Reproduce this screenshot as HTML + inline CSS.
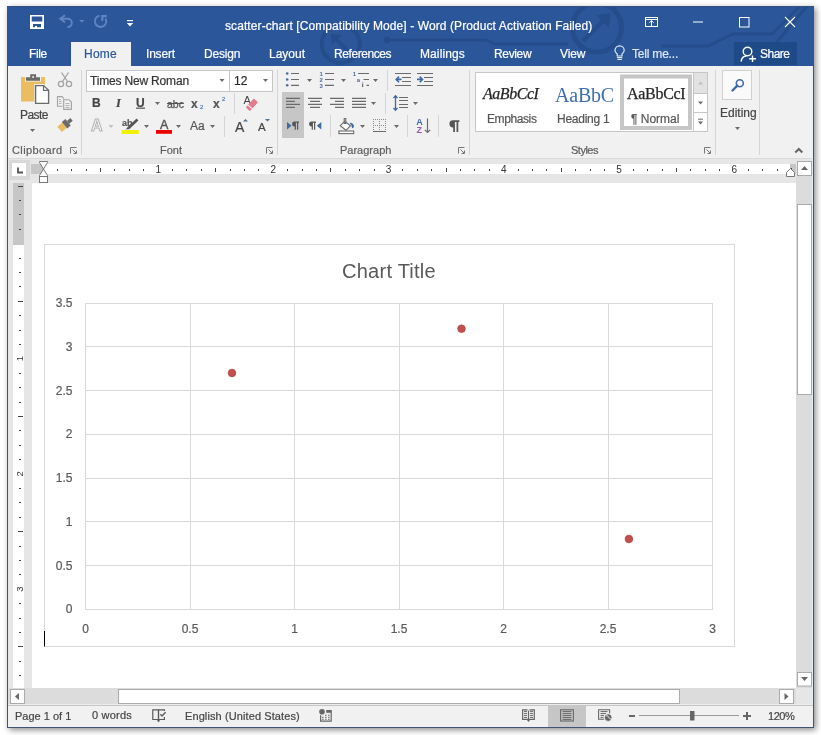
<!DOCTYPE html>
<html><head><meta charset="utf-8">
<style>
*{margin:0;padding:0;box-sizing:border-box}
html,body{width:821px;height:735px;overflow:hidden;background:#fff;position:relative;font-family:"Liberation Sans",sans-serif}
.a{position:absolute}
.t{position:absolute;white-space:nowrap;line-height:1;will-change:transform;-webkit-text-stroke-width:.2px}
svg{position:absolute;overflow:visible;will-change:transform}
</style></head><body>
<!-- window frame -->
<div class="a" style="left:7px;top:6px;width:807px;height:722px;background:#f1f1f1;border:1px solid #3d5474;border-top:0;box-shadow:2px 2px 6px rgba(0,0,0,.45)"></div>
<!-- title + tabs blue -->
<div class="a" style="left:7px;top:6px;width:807px;height:60px;background:#2b579a"></div>

<!-- TITLEBAR -->
<svg width="821" height="70" style="left:0;top:0" viewBox="0 0 821 70">
  <defs><clipPath id="tb"><rect x="8" y="7" width="805" height="59"/></clipPath></defs>
  <g clip-path="url(#tb)">
  <g fill="none" stroke="#254d8b" stroke-width="3">
    <circle cx="597" cy="27.6" r="24.5" stroke-width="5"/>
    <path d="M583 41 L603 21" stroke-width="4"/>
    <path d="M387 40 H483 Q489 40 494 44 H568"/>
    <circle cx="340.7" cy="44" r="19" stroke-width="4"/>
    <path d="M348 51 L336 39" stroke-width="3.5"/>
    <path d="M661 46 H708 L733 34 H772 L800 6"/>
    <path d="M757 66 L807 6"/>
  </g>
  <path d="M611 13 L596 15 L609 28 Z" fill="#254d8b"/>
  <path d="M331 34 L342 35 L332 45 Z" fill="#254d8b"/>
  <circle cx="387" cy="40" r="3.5" fill="#254d8b"/>
  </g>
  <!-- save -->
  <path fill="#fff" fill-rule="evenodd" d="M30 15 H44 V29 H30 Z M31.7 16.5 H42.3 V21.6 H31.7 Z M33 24 H41 V27.3 H37 V26 H35 V27.3 H33 Z"/>
  <!-- undo -->
  <g fill="none" stroke="#5f84c3" stroke-width="1.9">
    <path d="M65 15.3 L60.2 18.8 L65 22.3"/>
    <path d="M60.5 18.8 H68 A4.1 4.1 0 0 1 67.5 27"/>
  </g>
  <path d="M79 20 H84.5 L81.75 22.5 Z" fill="#5f84c3"/>
  <!-- redo -->
  <path d="M99.6 15.64 A5.7 5.7 0 1 0 105.5 18.4" fill="none" stroke="#5f84c3" stroke-width="1.9"/>
  <path d="M101.2 15 H106.9 V17.2 H103.4 V20.7 H101.2 Z" fill="#5f84c3"/>
  <!-- customize -->
  <rect x="127" y="20" width="6" height="1.2" fill="#fff"/>
  <path d="M126.8 23 H133.2 L130 26.6 Z" fill="#fff"/>
  <!-- ribbon display options -->
  <g fill="none" stroke="#fff" stroke-width="1">
    <rect x="645.5" y="17.5" width="12" height="9"/>
    <path d="M645.5 19.5 H657.5"/>
    <path d="M651.5 26.5 V20.6 M649.3 22.8 L651.5 20.6 L653.7 22.8"/>
  </g>
  <rect x="693" y="21.5" width="10" height="1" fill="#fff"/>
  <rect x="739.5" y="17.5" width="9.5" height="9.5" fill="none" stroke="#fff" stroke-width="1"/>
  <path d="M785 17 L795 27 M795 17 L785 27" stroke="#fff" stroke-width="1.1"/>
  <!-- share bg -->
  <rect x="734" y="42" width="63" height="23" fill="#1f4a88"/>
  <g fill="none" stroke="#fff" stroke-width="1.4">
    <circle cx="747.5" cy="51.5" r="4.3"/>
    <path d="M741 61.5 Q742 56 746.5 56"/>
    <path d="M752.5 55.5 V62 M749.2 58.7 H756"/>
  </g>
  <!-- bulb -->
  <g fill="none" stroke="#dfe8f6" stroke-width="1.2">
    <path d="M617.2 56 V54 Q615 52 615 50.5 A4.6 4.6 0 0 1 624.2 50.5 Q624.2 52 622 54 V56 Z"/>
    <path d="M617 57.6 H622.3 M617.5 59.5 H621.8"/>
  </g>
</svg>
<div class="a" style="left:71px;top:42px;width:60px;height:24px;background:#f1f1f1"></div>
<div class="t" style="left:225px;top:20px;font-size:12px;letter-spacing:.09px;color:#fff">scatter-chart [Compatibility Mode] - Word (Product Activation Failed)</div>
<div class="t" style="left:28.5px;top:48px;font-size:12px;letter-spacing:-.4px;color:#fff">File</div>
<div class="t" style="left:84px;top:48px;font-size:12px;letter-spacing:.25px;color:#2b579a">Home</div>
<div class="t" style="left:146px;top:48px;font-size:12px;letter-spacing:-.2px;color:#fff">Insert</div>
<div class="t" style="left:204px;top:48px;font-size:12px;letter-spacing:-.2px;color:#fff">Design</div>
<div class="t" style="left:269px;top:48px;font-size:12px;color:#fff">Layout</div>
<div class="t" style="left:334px;top:48px;font-size:12px;letter-spacing:-.42px;color:#fff">References</div>
<div class="t" style="left:420px;top:48px;font-size:12px;letter-spacing:.1px;color:#fff">Mailings</div>
<div class="t" style="left:494px;top:48px;font-size:12px;letter-spacing:-.35px;color:#fff">Review</div>
<div class="t" style="left:560px;top:48px;font-size:12px;letter-spacing:-.15px;color:#fff">View</div>
<div class="t" style="left:631.5px;top:48px;font-size:12px;letter-spacing:-.2px;color:#dfe8f6">Tell me...</div>
<div class="t" style="left:760px;top:48px;font-size:12px;letter-spacing:-.5px;color:#fff">Share</div>

<!-- ribbon -->
<div class="a" style="left:8px;top:66px;width:805px;height:92px;background:#f1f1f1"></div>
<div class="a" style="left:8px;top:158px;width:805px;height:1px;background:#dadada"></div>

<!-- RIBBON ICONS -->
<svg width="821" height="160" style="left:0;top:0" viewBox="0 0 821 160">
  <!-- separators -->
  <g fill="#d5d5d5">
    <rect x="81" y="70" width="1" height="85"/>
    <rect x="277" y="70" width="1" height="85"/>
    <rect x="469" y="70" width="1" height="85"/>
    <rect x="715" y="70" width="1" height="85"/>
    <rect x="759" y="70" width="1" height="85"/>
    <rect x="234" y="93" width="1" height="21"/>
    <rect x="224" y="116" width="1" height="21"/>
    <rect x="387" y="70" width="1" height="21"/>
    <rect x="385" y="93" width="1" height="21"/>
    <rect x="330" y="115" width="1" height="22"/>
    <rect x="407" y="115" width="1" height="22"/>
    <rect x="438" y="115" width="1" height="22"/>
  </g>
  <!-- paste -->
  <rect x="21" y="77" width="24" height="24.5" fill="#ebbd62"/>
  <rect x="25" y="76" width="16" height="5.5" fill="#f1f1f1"/>
  <path d="M26 77.3 H30.2 V74.2 H36.1 V77.3 H40 V80.8 H26 Z" fill="#6b6b6b"/>
  <circle cx="33.1" cy="77" r="1" fill="#f1f1f1"/>
  <path d="M34.2 84 H44 L49.8 89.5 V104.8 H34.2 Z" fill="#f1f1f1"/>
  <path d="M35.6 85.6 H43.5 L48.6 90.3 V103.4 H35.6 Z" fill="#fff" stroke="#6b6b6b" stroke-width="1.4"/>
  <path d="M43.5 85.6 V90.3 H48.6" fill="none" stroke="#6b6b6b" stroke-width="1.2"/>
  <path d="M30 129 H35 L32.5 132 Z" fill="#6b6b6b"/>
  <!-- scissors -->
  <g fill="none" stroke="#a3a3a3" stroke-width="1.3">
    <path d="M61.5 72.5 L67.5 81.5 M68.5 72.5 L62.5 81.5"/>
    <circle cx="61" cy="84" r="2.6"/>
    <circle cx="69" cy="84" r="2.6"/>
  </g>
  <!-- copy -->
  <g fill="none" stroke="#a3a3a3" stroke-width="1.1">
    <path d="M62.5 106.3 H57.5 V96.6 H62 L64 98.6"/>
    <path d="M63.7 99.7 H69 L71.4 102.1 V109.4 H63.7 Z" fill="#f1f1f1"/>
    <path d="M59 99.5 H61 M59 101.5 H61.5 M59 103.5 H61.5 M65.5 103.5 H69.5 M65.5 105.5 H69.5 M65.5 107.5 H69.5" stroke-width=".8"/>
  </g>
  <!-- format painter -->
  <g transform="translate(.6 -1.6) rotate(-40 65.5 125.5)">
    <rect x="57" y="122" width="6.5" height="7" fill="#ebbd62"/>
    <rect x="63.5" y="121.3" width="4.5" height="8.4" fill="#6b6b6b"/>
    <rect x="68" y="123.8" width="4.5" height="3.6" fill="#6b6b6b"/>
  </g>
  <!-- dialog launchers -->
  <g fill="none" stroke="#777" stroke-width="1">
    <path d="M70.5 153.5 V147.5 H76.5 M72.5 149.5 L76 153 M76.5 150.5 V153.5 H73.5"/>
    <path d="M266.5 153.5 V147.5 H272.5 M268.5 149.5 L272 153 M272.5 150.5 V153.5 H269.5"/>
    <path d="M458.5 153.5 V147.5 H464.5 M460.5 149.5 L464 153 M464.5 150.5 V153.5 H461.5"/>
    <path d="M704.5 153.5 V147.5 H710.5 M706.5 149.5 L710 153 M710.5 150.5 V153.5 H707.5"/>
  </g>
  <!-- font boxes -->
  <rect x="86.5" y="70.5" width="143" height="21" fill="#fff" stroke="#c6c6c6"/>
  <rect x="229.5" y="70.5" width="43" height="21" fill="#fff" stroke="#c6c6c6"/>
  <g fill="#6b6b6b">
    <path d="M219.5 79 H224.5 L222 82 Z"/>
    <path d="M263 79 H268 L265.5 82 Z"/>
    <path d="M155 102 H160 L157.5 105 Z"/>
    <path d="M144 125 H149 L146.5 128 Z"/>
    <path d="M176 125 H181 L178.5 128 Z"/>
    <path d="M210 125 H215 L212.5 128 Z"/>
  </g>
  <path d="M108.5 125 H113.5 L111 128 Z" fill="#c0c0c0"/>
  <text x="91" y="131.2" font-family="Liberation Sans" font-size="16" font-weight="bold" fill="#fafafa" stroke="#b3b3b3" stroke-width="1">A</text>
  <!-- underline -->
  <rect x="136" y="107.6" width="9" height="1.1" fill="#444"/>
  <!-- abc strike -->
  <rect x="167" y="103" width="16.5" height="1" fill="#555"/>
  <!-- clear formatting -->
  <text x="243.5" y="103.8" font-family="Liberation Sans" font-size="11" fill="#444">A</text>
  <g transform="rotate(-48 251.8 104.8)">
    <rect x="245.8" y="102" width="12" height="5.6" rx="1" fill="#e8788a"/>
    <rect x="248.6" y="101.5" width="1.1" height="6.6" fill="#f1f1f1"/>
  </g>
  <!-- highlighter pen -->
  <path d="M128 128.5 L137.5 119.5" stroke="#555" stroke-width="2.6"/>
  <path d="M125.5 129.5 L127.5 127.5 L129 129 Z" fill="#555"/>
  <rect x="121.7" y="130" width="17" height="4" fill="#f2f200"/>
  <rect x="156" y="130" width="16" height="3.8" fill="#ee0000"/>
  <!-- grow/shrink arrows -->
  <path d="M243 121.6 L245.5 119 L248 121.6 Z" fill="#4d6e96"/>
  <path d="M265 119 H270 L267.5 121.6 Z" fill="#4d6e96"/>
  <!-- paragraph: bullets -->
  <g fill="#4a6c9c">
    <circle cx="287.2" cy="73.5" r="1.3"/><circle cx="287.2" cy="79.5" r="1.3"/><circle cx="287.2" cy="85.3" r="1.3"/>
  </g>
  <g stroke="#6b6b6b" stroke-width="1.2">
    <path d="M291 73.5 H299 M291 79.5 H299 M291 85.3 H299"/>
    <path d="M325 73.5 H334 M325 79.5 H334 M325 85.3 H334"/>
    <path d="M358 73.5 H369 M363.5 79.5 H369 M366.5 85.3 H369"/>
  </g>
  <g fill="#4a6c9c" font-family="Liberation Sans" font-size="6" font-weight="bold">
    <text x="319.6" y="76">1</text><text x="319.6" y="82">2</text><text x="319.6" y="88">3</text>
    <text x="352.8" y="76">1</text><text x="356.8" y="82">a</text>
  </g>
  <rect x="362" y="84" width="1.2" height="3" fill="#6b6b6b"/>
  <rect x="362" y="82.5" width="1.2" height="1" fill="#6b6b6b"/>
  <g fill="#6b6b6b">
    <path d="M307 79 H312 L309.5 82 Z"/>
    <path d="M341 79 H346 L343.5 82 Z"/>
    <path d="M373 79 H378 L375.5 82 Z"/>
    <path d="M371 102 H376 L373.5 105 Z"/>
    <path d="M413 102 H418 L415.5 105 Z"/>
    <path d="M360 125 H365 L362.5 128 Z"/>
    <path d="M394 125 H399 L396.5 128 Z"/>
  </g>
  <!-- indent -->
  <g stroke="#6b6b6b" stroke-width="1.2">
    <path d="M395 73.5 H411 M402 77.5 H411 M402 81.5 H411 M395 85.5 H411" stroke-width="1"/>
    <path d="M417 73.5 H433 M424 77.5 H433 M424 81.5 H433 M417 85.5 H433" stroke-width="1"/>
  </g>
  <g fill="none" stroke="#3f6aa8" stroke-width="1.6">
    <path d="M396 79.4 H401.5 M399 76.6 L396.2 79.4 L399 82.2"/>
    <path d="M417 79.4 H422.5 M419.7 76.6 L422.5 79.4 L419.7 82.2"/>
  </g>
  <!-- alignment -->
  <rect x="282" y="92" width="22" height="46" fill="#c6c6c6"/>
  <g stroke="#6b6b6b" stroke-width="1.2">
    <path d="M286 98.3 H300 M286 101.3 H295 M286 104.3 H300 M286 107.3 H295"/>
    <path d="M308 98.3 H322 M310 101.3 H320 M308 104.3 H322 M310 107.3 H320"/>
    <path d="M330 98.3 H344 M335 101.3 H344 M330 104.3 H344 M335 107.3 H344"/>
    <path d="M352 98.3 H366 M352 101.3 H366 M352 104.3 H366 M352 107.3 H366"/>
  </g>
  <!-- line spacing -->
  <g stroke="#6b6b6b" stroke-width="1">
    <path d="M399 97.5 H408 M399 100.5 H408 M399 104.5 H408 M399 107.5 H408"/>
  </g>
  <g fill="none" stroke="#3f6aa8" stroke-width="1.3">
    <path d="M395.5 96 V110 M393.5 98 L395.5 95.7 L397.5 98 M393.5 108 L395.5 110.3 L397.5 108"/>
  </g>
  <!-- ltr/rtl -->
  <path d="M287 122 L291.5 125.7 L287 129.4 Z" fill="#3f6aa8"/>
  <path id="pil" d="M294.5 121.6 H299 V122.8 H298.2 V129.7 H297 V122.8 H295.9 V129.7 H294.7 V126.6 A2.5 2.5 0 0 1 294.5 121.6 Z" fill="#555"/>
  <use href="#pil" x="17"/>
  <g transform="translate(449 120.3) scale(1.45) translate(-291.8 -121.6)"><use href="#pil" fill="#6b6b6b"/></g>
  <path d="M321.3 122 L316.8 125.7 L321.3 129.4 Z" fill="#3f6aa8"/>
  <!-- shading -->
  <g fill="none" stroke="#6b6b6b" stroke-width="1.1">
    <path d="M344.7 121.3 L340.2 125.7 L346 130.3 L350.5 125.7 Z" fill="#fff"/>
    <path d="M344.2 118.5 H345.8 V123.5 H344.2 Z"/>
    <rect x="338.9" y="131" width="14.8" height="2.6" fill="#fff"/>
  </g>
  <path d="M349.5 122.8 Q353.5 122.5 354 126.5 Q353.5 128.5 352 128.3 L351.5 125.5 Z" fill="#3f6aa8"/>
  <!-- borders -->
  <g fill="#6b6b6b">
    <rect x="373" y="131" width="13" height="1"/>
  </g>
  <g stroke="#8a8a8a" stroke-width="1" stroke-dasharray="1 1">
    <path d="M373.5 119 V130 M385.5 119 V130 M379.5 119 V130 M373 119.5 H386 M373 125.5 H386"/>
  </g>
  <!-- sort -->
  <g font-family="Liberation Sans" font-size="9" font-weight="bold">
    <text x="416.3" y="125.3" fill="#3f6aa8">A</text>
    <text x="416.6" y="133.2" fill="#9b59b6">Z</text>
  </g>
  <path d="M427.5 118.5 V132.5 M424.8 129.8 L427.5 132.5 L430.2 129.8" fill="none" stroke="#6b6b6b" stroke-width="1.2"/>
  <!-- styles gallery -->
  <rect x="475.5" y="72.5" width="232" height="59" fill="#fff" stroke="#c6c6c6"/>
  <rect x="622" y="76.5" width="68" height="51.5" fill="none" stroke="#c6c6c6" stroke-width="4"/>
  <rect x="693.5" y="72.5" width="14" height="59" fill="#fff" stroke="#c6c6c6"/>
  <rect x="694" y="73" width="13" height="20.5" fill="#e2e2e2"/>
  <path d="M694 93.5 H707 M694 112.5 H707" stroke="#c6c6c6"/>
  <path d="M698 84.5 H703 L700.5 81.5 Z" fill="#c0c0c0"/>
  <path d="M698 101.5 H703 L700.5 104.5 Z" fill="#6b6b6b"/>
  <path d="M698 119.2 H703" stroke="#6b6b6b"/>
  <path d="M698 121.5 H703 L700.5 124.5 Z" fill="#6b6b6b"/>
  <!-- editing -->
  <rect x="722.5" y="70.5" width="29" height="29" fill="#fafafa" stroke="#d0d0d0"/>
  <circle cx="739.8" cy="83.2" r="3.5" fill="none" stroke="#3f6aa8" stroke-width="1.6"/>
  <path d="M737.3 85.7 L732.5 90.5" stroke="#3f6aa8" stroke-width="2.4" stroke-linecap="round"/>
  <path d="M735 127 H740 L737.5 130 Z" fill="#6b6b6b"/>
  <path d="M795.3 152.6 L798.8 149.1 L802.3 152.6" fill="none" stroke="#666" stroke-width="2.1"/>
</svg>
<div class="t" style="left:19.5px;top:108.5px;font-size:12px;letter-spacing:-.55px;color:#444">Paste</div>
<div class="t" style="left:11.5px;top:145px;font-size:11px;letter-spacing:.37px;color:#5c5c5c">Clipboard</div>
<div class="t" style="left:160px;top:145px;font-size:11px;color:#5c5c5c">Font</div>
<div class="t" style="left:339.5px;top:145px;font-size:11px;color:#5c5c5c">Paragraph</div>
<div class="t" style="left:570.5px;top:145px;font-size:11px;letter-spacing:-.5px;color:#5c5c5c">Styles</div>
<div class="t" style="left:90px;top:74.5px;font-size:12px;letter-spacing:-.18px;color:#333">Times New Roman</div>
<div class="t" style="left:233.5px;top:74.5px;font-size:12px;color:#262626">12</div>
<div class="t" style="left:92px;top:97px;font-size:12px;font-weight:bold;color:#444">B</div>
<div class="t" style="left:115.5px;top:97px;font-size:12.5px;font-weight:bold;font-style:italic;font-family:'Liberation Serif';color:#444">I</div>
<div class="t" style="left:136px;top:97px;font-size:12px;font-weight:bold;color:#444">U</div>
<div class="t" style="left:167.2px;top:98.6px;font-size:10.5px;-webkit-text-stroke:.25px #555;color:#555">abc</div>
<div class="t" style="left:191px;top:98px;font-size:12px;font-weight:bold;color:#555">x</div>
<div class="t" style="left:199.6px;top:103.8px;font-size:6px;color:#4a7ab5">2</div>
<div class="t" style="left:213px;top:98px;font-size:12px;font-weight:bold;color:#555">x</div>
<div class="t" style="left:221.8px;top:96.2px;font-size:6px;color:#4a7ab5">2</div>

<div class="t" style="left:121.7px;top:118.5px;font-size:9px;font-weight:bold;color:#555">ab</div>
<div class="t" style="left:159.5px;top:118.5px;font-size:12.5px;-webkit-text-stroke:.4px #555;color:#555">A</div>
<div class="t" style="left:190px;top:119.5px;font-size:12px;color:#555">Aa</div>
<div class="t" style="left:235.3px;top:120.2px;font-size:14px;color:#444">A</div>
<div class="t" style="left:258.2px;top:122.2px;font-size:11.5px;color:#444">A</div>



<div class="t" style="left:483px;top:86px;font-size:16px;font-style:italic;letter-spacing:-.45px;-webkit-text-stroke:.25px #262626;font-family:'Liberation Serif';color:#262626">AaBbCcI</div>
<div class="t" style="left:487px;top:112.5px;font-size:12px;letter-spacing:-.4px;color:#555">Emphasis</div>
<div class="t" style="left:555px;top:84.5px;font-size:20px;letter-spacing:-.2px;-webkit-text-stroke-width:0;font-family:'Liberation Serif';color:#3e6fb0">AaBbC</div>
<div class="t" style="left:557px;top:112.5px;font-size:12px;letter-spacing:-.25px;color:#555">Heading 1</div>
<div class="t" style="left:626.5px;top:86px;font-size:16px;letter-spacing:-.3px;-webkit-text-stroke:.25px #262626;font-family:'Liberation Serif';color:#262626">AaBbCcI</div>
<div class="t" style="left:631px;top:112.5px;font-size:12px;color:#555">&para; Normal</div>
<div class="t" style="left:719.5px;top:107px;font-size:12px;color:#444">Editing</div>

<!-- ruler area -->
<div class="a" style="left:8px;top:159px;width:805px;height:24px;background:#e6e6e6"></div>
<!-- left workspace -->
<div class="a" style="left:8px;top:183px;width:24px;height:505px;background:#e6e6e6"></div>
<!-- doc -->
<div class="a" style="left:32px;top:183px;width:764px;height:505px;background:#fff"></div>
<!-- vscroll -->
<div class="a" style="left:796px;top:176px;width:17px;height:512px;background:#dcdcdc"></div>
<!-- hscroll -->
<div class="a" style="left:8px;top:688px;width:788px;height:16px;background:#dcdcdc"></div>
<div class="a" style="left:796px;top:688px;width:17px;height:16px;background:#e6e6e6"></div>

<!-- RULERS -->
<svg width="821" height="735" style="left:0;top:0" viewBox="0 0 821 735">
  <rect x="9" y="160" width="21" height="20" fill="#d8d8d8"/>
  <rect x="12" y="163" width="14" height="13" fill="#fff"/>
  <path d="M18 167.5 V172.5 H23" fill="none" stroke="#555" stroke-width="1.8"/>
  <rect x="31" y="164" width="765" height="10" fill="#c6c6c6"/>
  <rect x="43" y="164" width="747" height="10" fill="#fff"/>
  <g fill="#444"><rect x="57" y="169" width="1" height="2"/><rect x="71" y="169" width="1" height="2"/><rect x="86" y="169" width="1" height="2"/><rect x="100" y="168" width="1" height="4"/><rect x="114" y="169" width="1" height="2"/><rect x="129" y="169" width="1" height="2"/><rect x="143" y="169" width="1" height="2"/><rect x="172" y="169" width="1" height="2"/><rect x="186" y="169" width="1" height="2"/><rect x="201" y="169" width="1" height="2"/><rect x="215" y="168" width="1" height="4"/><rect x="230" y="169" width="1" height="2"/><rect x="244" y="169" width="1" height="2"/><rect x="258" y="169" width="1" height="2"/><rect x="287" y="169" width="1" height="2"/><rect x="302" y="169" width="1" height="2"/><rect x="316" y="169" width="1" height="2"/><rect x="330" y="168" width="1" height="4"/><rect x="345" y="169" width="1" height="2"/><rect x="359" y="169" width="1" height="2"/><rect x="374" y="169" width="1" height="2"/><rect x="402" y="169" width="1" height="2"/><rect x="417" y="169" width="1" height="2"/><rect x="431" y="169" width="1" height="2"/><rect x="446" y="168" width="1" height="4"/><rect x="460" y="169" width="1" height="2"/><rect x="474" y="169" width="1" height="2"/><rect x="489" y="169" width="1" height="2"/><rect x="518" y="169" width="1" height="2"/><rect x="532" y="169" width="1" height="2"/><rect x="546" y="169" width="1" height="2"/><rect x="561" y="168" width="1" height="4"/><rect x="575" y="169" width="1" height="2"/><rect x="590" y="169" width="1" height="2"/><rect x="604" y="169" width="1" height="2"/><rect x="633" y="169" width="1" height="2"/><rect x="647" y="169" width="1" height="2"/><rect x="662" y="169" width="1" height="2"/><rect x="676" y="168" width="1" height="4"/><rect x="690" y="169" width="1" height="2"/><rect x="705" y="169" width="1" height="2"/><rect x="719" y="169" width="1" height="2"/><rect x="748" y="169" width="1" height="2"/><rect x="762" y="169" width="1" height="2"/><rect x="777" y="169" width="1" height="2"/><rect x="791" y="168" width="1" height="4"/></g>
  <g fill="#333" font-family="Liberation Sans" font-size="10"><text x="158.2" y="173" text-anchor="middle">1</text><text x="273.4" y="173" text-anchor="middle">2</text><text x="388.6" y="173" text-anchor="middle">3</text><text x="503.8" y="173" text-anchor="middle">4</text><text x="619.0" y="173" text-anchor="middle">5</text><text x="734.2" y="173" text-anchor="middle">6</text></g>
  <!-- indent markers -->
  <path d="M39.5 161.5 H47.5 V162.5 L43.5 169 L47.5 175.5 V176.5 H39.5 V175.5 L43.5 169 L39.5 162.5 Z" fill="#fff" stroke="#777" stroke-width="1"/>
  <rect x="39.5" y="176.5" width="8" height="6" fill="#fff" stroke="#777" stroke-width="1"/>
  <path d="M786.5 176.5 V172.5 L790.5 168.5 L794.5 172.5 V176.5 Z" fill="#fff" stroke="#777"/>
  <!-- vertical ruler -->
  <rect x="13" y="183" width="11" height="62" fill="#c6c6c6"/>
  <rect x="13" y="245" width="11" height="443" fill="#fff"/>
  <g fill="#444"><rect x="18" y="186" width="5" height="1"/><rect x="19" y="200" width="2" height="1"/><rect x="19" y="214" width="2" height="1"/><rect x="19" y="229" width="2" height="1"/><rect x="19" y="258" width="2" height="1"/><rect x="19" y="272" width="2" height="1"/><rect x="19" y="286" width="2" height="1"/><rect x="18" y="301" width="5" height="1"/><rect x="19" y="315" width="2" height="1"/><rect x="19" y="330" width="2" height="1"/><rect x="19" y="344" width="2" height="1"/><rect x="19" y="373" width="2" height="1"/><rect x="19" y="387" width="2" height="1"/><rect x="19" y="402" width="2" height="1"/><rect x="18" y="416" width="5" height="1"/><rect x="19" y="430" width="2" height="1"/><rect x="19" y="445" width="2" height="1"/><rect x="19" y="459" width="2" height="1"/><rect x="19" y="488" width="2" height="1"/><rect x="19" y="502" width="2" height="1"/><rect x="19" y="517" width="2" height="1"/><rect x="18" y="531" width="5" height="1"/><rect x="19" y="546" width="2" height="1"/><rect x="19" y="560" width="2" height="1"/><rect x="19" y="574" width="2" height="1"/><rect x="19" y="603" width="2" height="1"/><rect x="19" y="618" width="2" height="1"/><rect x="19" y="632" width="2" height="1"/><rect x="18" y="646" width="5" height="1"/><rect x="19" y="661" width="2" height="1"/><rect x="19" y="675" width="2" height="1"/></g>
  <g fill="#333" font-family="Liberation Sans" font-size="9.5"><text x="0" y="0" transform="translate(22.5 358.7) rotate(-90)" text-anchor="middle">1</text><text x="0" y="0" transform="translate(22.5 473.9) rotate(-90)" text-anchor="middle">2</text><text x="0" y="0" transform="translate(22.5 589.1) rotate(-90)" text-anchor="middle">3</text></g>
</svg>

<!-- CHART -->
<svg width="821" height="735" style="left:0;top:0" viewBox="0 0 821 735">
  <rect x="44.5" y="244.5" width="690" height="402" fill="#fff" stroke="#d9d9d9"/>
  <g fill="#d9d9d9">
    <rect x="190" y="303" width="1" height="306"/><rect x="294" y="303" width="1" height="306"/><rect x="399" y="303" width="1" height="306"/><rect x="503" y="303" width="1" height="306"/><rect x="608" y="303" width="1" height="306"/><rect x="85" y="565" width="627" height="1"/><rect x="85" y="521" width="627" height="1"/><rect x="85" y="478" width="627" height="1"/><rect x="85" y="434" width="627" height="1"/><rect x="85" y="390" width="627" height="1"/><rect x="85" y="346" width="627" height="1"/>
    <rect x="85" y="303" width="1" height="306"/>
    <rect x="712" y="303" width="1" height="306"/>
    <rect x="85" y="303" width="628" height="1"/>
    <rect x="85" y="609" width="628" height="1"/>
  </g>
  <g fill="#595959" stroke="#595959" stroke-width=".2" font-family="Liberation Sans" font-size="12"><text x="72.5" y="613.3" text-anchor="end">0</text><text x="72.5" y="569.6" text-anchor="end">0.5</text><text x="72.5" y="525.9" text-anchor="end">1</text><text x="72.5" y="482.2" text-anchor="end">1.5</text><text x="72.5" y="438.4" text-anchor="end">2</text><text x="72.5" y="394.7" text-anchor="end">2.5</text><text x="72.5" y="351.0" text-anchor="end">3</text><text x="72.5" y="307.3" text-anchor="end">3.5</text><text x="85.5" y="633" text-anchor="middle">0</text><text x="190.0" y="633" text-anchor="middle">0.5</text><text x="294.5" y="633" text-anchor="middle">1</text><text x="399.0" y="633" text-anchor="middle">1.5</text><text x="503.5" y="633" text-anchor="middle">2</text><text x="608.0" y="633" text-anchor="middle">2.5</text><text x="712.5" y="633" text-anchor="middle">3</text></g>
  <text x="389" y="277.5" text-anchor="middle" fill="#595959" font-family="Liberation Sans" font-size="20" letter-spacing=".25">Chart Title</text>
  <g fill="#c0504d" stroke="#b2433f" stroke-width="0.8">
    <circle cx="232" cy="373" r="3.8"/>
    <circle cx="461.5" cy="328.7" r="3.8"/>
    <circle cx="628.9" cy="539" r="3.8"/>
  </g>
  <rect x="44" y="631" width="1" height="15.5" fill="#000"/>
</svg>

<!-- SCROLLBARS -->
<svg width="821" height="735" style="left:0;top:0" viewBox="0 0 821 735">
  <g fill="#fff" stroke="#ababab">
    <rect x="797.5" y="161.5" width="14" height="14"/>
    <rect x="797.5" y="204.5" width="14" height="190"/>
    <rect x="797.5" y="672.5" width="14" height="13.5"/>
    <rect x="10.5" y="689.5" width="14" height="14"/>
    <rect x="118.5" y="689.5" width="561" height="14"/>
    <rect x="779.5" y="689.5" width="14" height="14"/>
  </g>
  <g fill="#666">
    <path d="M801 170 H808 L804.5 166 Z"/>
    <path d="M801 677 H808 L804.5 681 Z"/>
    <path d="M19 693 V700 L15 696.5 Z"/>
    <path d="M784.5 693 V700 L788.5 696.5 Z"/>
  </g>
</svg>

<div class="a" style="left:812px;top:66px;width:1px;height:661px;background:#e3ecf8"></div>
<div class="a" style="left:8px;top:726px;width:805px;height:1px;background:#e3ecf8"></div>
<div class="a" style="left:7px;top:6px;width:807px;height:1px;background:#35527e"></div>
<!-- status -->
<div class="a" style="left:8px;top:704px;width:805px;height:1px;background:#ececec"></div>
<div class="a" style="left:8px;top:705px;width:805px;height:1px;background:#c6c6c6"></div>
<div class="a" style="left:8px;top:706px;width:805px;height:21px;background:#f1f1f1"></div>

<!-- STATUS ICONS -->
<svg width="821" height="735" style="left:0;top:0" viewBox="0 0 821 735">
  <rect x="548" y="706" width="38" height="21" fill="#c6c6c6"/>
  <g fill="none" stroke="#5a5a5a" stroke-width="1.2">
    <path d="M158.5 719.5 H152.8 V709.8 H158.5 Z"/>
    <path d="M158.5 709.8 H164.4 V711"/>
    <path d="M164.4 717 V719.5 H158.5"/>
    <path d="M158.5 710 V721.5"/>
    <path d="M160.4 714.3 L162 715.9 L165.6 712.3" stroke-width="1.4"/>
  </g>
  <path d="M156.8 720.3 H160.2 L158.5 722.2 Z" fill="#5a5a5a"/>
  <!-- macro -->
  <circle cx="322" cy="711.8" r="2.8" fill="#666"/>
  <rect x="326.2" y="710" width="5.6" height="2.8" fill="#666"/>
  <path d="M320.6 715.2 V721.2 H331.2 V712.5" fill="none" stroke="#666" stroke-width="1.2"/>
  <g fill="#666">
    <rect x="325" y="714.7" width="1.6" height="1"/><rect x="328" y="714.7" width="1.6" height="1"/>
    <rect x="322" y="716.8" width="1.6" height="1"/><rect x="325" y="716.8" width="1.6" height="1"/><rect x="328" y="716.8" width="1.6" height="1"/>
    <rect x="322" y="718.8" width="1.6" height="1"/><rect x="325" y="718.8" width="1.6" height="1"/><rect x="328" y="718.8" width="1.6" height="1"/>
  </g>
  <!-- read mode -->
  <g fill="none" stroke="#666" stroke-width="1.2">
    <path d="M527.5 709.8 H522.6 V719.3 H528.5 H534.3 V709.8 H529.5"/>
    <path d="M528.5 710.5 V721"/>
    <path d="M524 711.4 H527 M524 713.4 H527 M524 715.4 H527 M524 717.4 H527 M530 711.4 H533 M530 713.4 H533 M530 715.4 H533 M530 717.4 H533" stroke-width="1"/>
  </g>
  <path d="M527 720 H530 L528.5 722 Z" fill="#666"/>
  <!-- print layout -->
  <g fill="none" stroke="#666" stroke-width="1.1">
    <rect x="560.6" y="709.8" width="12.8" height="11.2"/>
    <path d="M562.5 711.6 H571.5 M562.5 713.6 H571.5 M562.5 715.6 H571.5 M562.5 717.6 H571.5 M562.5 719.4 H571.5" stroke-width="1"/>
  </g>
  <!-- web layout -->
  <g fill="none" stroke="#666" stroke-width="1.1">
    <path d="M604 719.3 H598.6 V709.7 H609.6 V713.5"/>
    <path d="M600.5 711.6 H607.5 M600.5 713.6 H606 M600.5 715.6 H604 M600.5 717.6 H603.5" stroke-width="1"/>
  </g>
  <circle cx="608.2" cy="717.6" r="3.9" fill="#666" stroke="#f1f1f1" stroke-width="1"/>
  <path d="M606 716 Q608 715 608.5 717 Q609.5 719 611 719" fill="none" stroke="#f1f1f1" stroke-width="0.9"/>
  <!-- zoom -->
  <rect x="629" y="715" width="6" height="2" fill="#666"/>
  <rect x="639" y="715" width="100" height="1" fill="#9a9a9a"/>
  <rect x="690" y="711" width="4.5" height="9.5" fill="#666"/>
  <rect x="743" y="715" width="8" height="2" fill="#666"/>
  <rect x="746" y="712" width="2" height="8" fill="#666"/>
</svg>
<div class="t" style="left:15px;top:711px;font-size:11px;color:#444">Page 1 of 1</div>
<div class="t" style="left:92px;top:710px;font-size:11px;letter-spacing:.2px;color:#444">0 words</div>
<div class="t" style="left:184.5px;top:711px;font-size:11px;letter-spacing:.1px;color:#444">English (United States)</div>
<div class="t" style="left:767.5px;top:711px;font-size:11px;letter-spacing:-.45px;color:#444">120%</div>

</body></html>
